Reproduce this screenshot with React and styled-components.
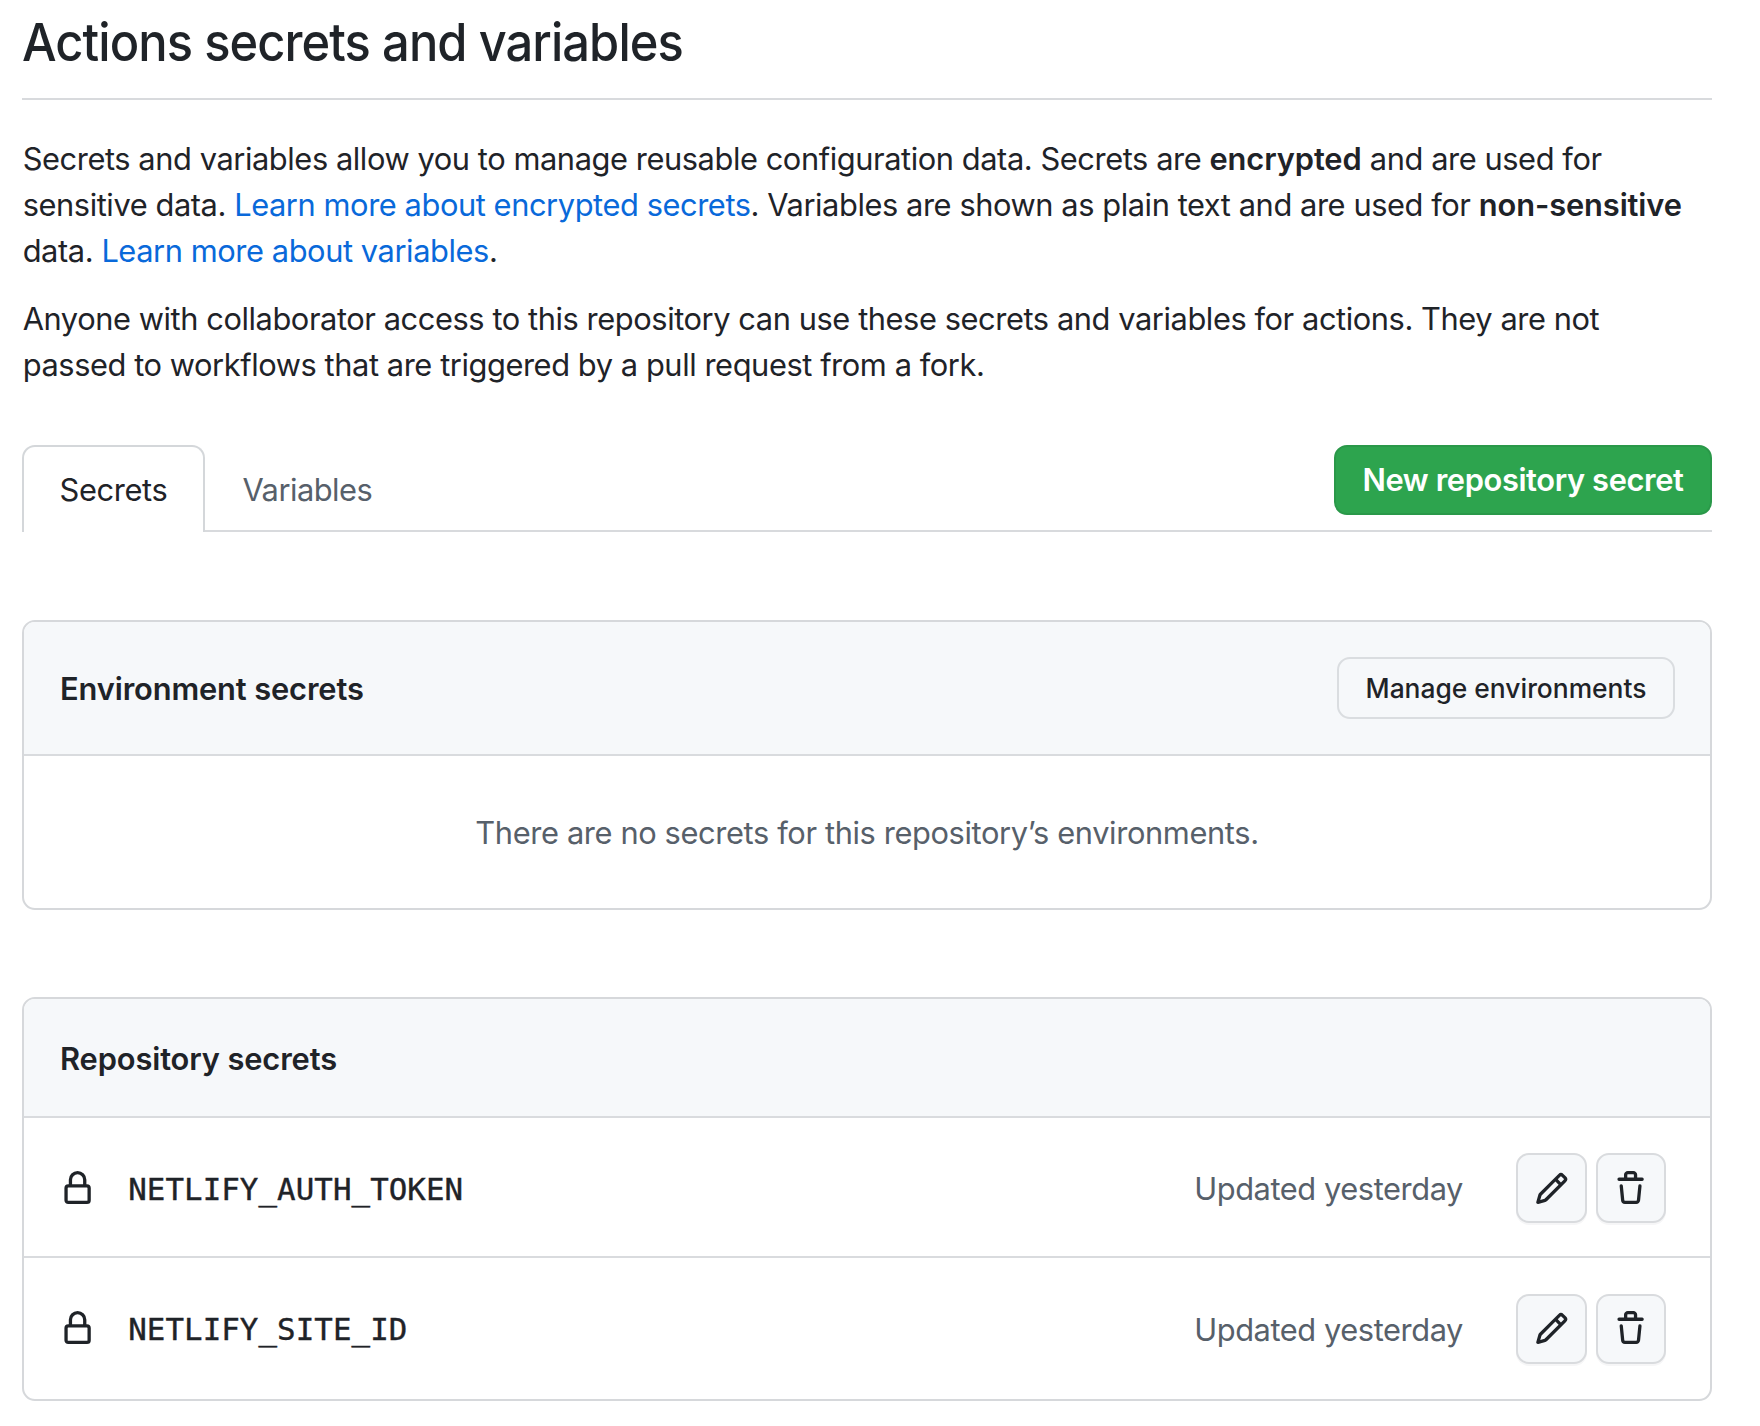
import React from "react";
import styled, { createGlobalStyle, css } from "styled-components";

const Global = createGlobalStyle`
  * { box-sizing: border-box; }
  body {
    margin: 0;
    background: #fff;
    color: #1f2328;
    font-family: Inter, "Liberation Sans", sans-serif;
    font-size: 30.8px;
    font-weight: 440;
    line-height: 46px;
  }
`;

const Page = styled.main`
  width: 1690px;
  margin-left: 22px;
  padding-top: 9px;
`;

const Title = styled.h1`
  margin: 0 0 36px;
  padding: 0 0 23px;
  border-bottom: 2px solid #d8dadd;
  font-size: 52.8px;
  line-height: 66px;
  font-weight: 460;
  letter-spacing: -1px;
`;

const Condensed = styled.span`
  display: block;
  width: max-content;
  transform: scaleX(0.925);
  transform-origin: left;
`;

const Paragraph = styled.p`
  margin: 0 0 22px;
  padding-left: 0.7px;
  white-space: nowrap;
  letter-spacing: -0.42px;
`;

const Line = styled.span`
  display: block;
  width: max-content;
`;

const Strong = styled.strong`
  font-weight: 600;
  letter-spacing: -0.1px;
`;

const Link = styled.a`
  color: #0969da;
  text-decoration: none;
`;

const TabBar = styled.div`
  display: flex;
  justify-content: space-between;
  align-items: flex-start;
  height: 87px;
  margin-top: 57px;
  box-shadow: inset 0 -2px 0 #d8dadd;
`;

const TabList = styled.nav`
  display: flex;
`;

const Tab = styled.a`
  height: 87px;
  padding: 20px 35.5px 0;
  border: 2px solid transparent;
  border-bottom: 0;
  border-radius: 13px 13px 0 0;
  color: #57606a;
  letter-spacing: -0.5px;
  ${(p) =>
    p.$active &&
    css`
      background: #fff;
      border-color: #d4d7da;
      color: #1f2328;
      letter-spacing: -0.35px;
    `}
`;

const PrimaryButton = styled.button`
  width: 378px;
  height: 70px;
  padding: 0;
  border: 2px solid #2a9849;
  border-radius: 13px;
  background: #2da44e;
  color: #fff;
  font: 560 30.8px/46px Inter, sans-serif;
  letter-spacing: -0.38px;
`;

const Box = styled.section`
  margin-top: ${(p) => p.$gap}px;
  border: 2px solid #d6d8db;
  border-radius: 13px;
  overflow: hidden;
`;

const BoxHeader = styled.header`
  display: flex;
  align-items: center;
  justify-content: space-between;
  height: ${(p) => p.$height}px;
  padding: 0 35px 0 36px;
  background: #f6f8fa;
  border-bottom: 2px solid #d9dbde;
`;

const Heading = styled.h2`
  margin: 0;
  padding-top: 2px;
  font-size: 30.8px;
  font-weight: 600;
  letter-spacing: -0.12px;
`;

const SmallButton = styled.button`
  width: 338px;
  height: 62px;
  padding: 0;
  border: 2px solid #dadde0;
  border-radius: 13px;
  background: #f6f8fa;
  color: #1f2328;
  font: 500 26.4px/40px Inter, sans-serif;
`;

const Empty = styled.div`
  display: flex;
  align-items: center;
  justify-content: center;
  height: 152px;
  padding-top: 1px;
  color: #57606a;
  letter-spacing: -0.37px;
`;

const Row = styled.div`
  display: flex;
  align-items: center;
  height: ${(p) => p.$height}px;
  padding: ${(p) => p.$shift}px 44px 0 36px;
  & + & {
    border-top: 2px solid #d9dbde;
  }
`;

const Icon = styled.svg`
  display: block;
  width: 35.2px;
  height: 35.2px;
  margin-top: 1px;
  fill: #1f2328;
`;

const Name = styled.code`
  margin-left: 33px;
  padding-top: 1px;
  font-family: "DejaVu Sans Mono", monospace;
  font-size: 30.8px;
  letter-spacing: 0.07px;
  -webkit-text-stroke: 0.4px currentColor;
`;

const Updated = styled.span`
  margin-left: auto;
  margin-right: 53px;
  padding-top: 2px;
  color: #57606a;
  letter-spacing: -0.42px;
`;

const Actions = styled.div`
  display: flex;
  gap: 9px;
`;

const IconButton = styled.button`
  display: grid;
  place-items: center;
  width: ${(p) => p.$width}px;
  height: 70px;
  padding: 0;
  border: 2px solid #d9dbde;
  border-radius: 13px;
  background: #f6f8fa;
  box-shadow: 0 2px 0 rgba(31, 35, 40, 0.04);
`;

const LockIcon = () => (
  <Icon viewBox="0 0 16 16">
    <path fillRule="evenodd" d="M4 4v2h-.25A1.75 1.75 0 002 7.75v5.5c0 .966.784 1.75 1.75 1.75h8.5A1.75 1.75 0 0014 13.25v-5.5A1.75 1.75 0 0012.25 6H12V4a4 4 0 10-8 0zm6.5 2V4a2.5 2.5 0 10-5 0v2h5zM12 7.5h.25a.25.25 0 01.25.25v5.5a.25.25 0 01-.25.25h-8.5a.25.25 0 01-.25-.25v-5.5a.25.25 0 01.25-.25H12z" />
  </Icon>
);

const PencilIcon = () => (
  <Icon viewBox="0 0 16 16">
    <path fillRule="evenodd" d="M11.013 1.427a1.75 1.75 0 012.474 0l1.086 1.086a1.75 1.75 0 010 2.474l-8.61 8.61c-.21.21-.47.364-.756.445l-3.251.93a.75.75 0 01-.927-.928l.929-3.25a1.75 1.75 0 01.445-.758l8.61-8.61zm1.414 1.06a.25.25 0 00-.354 0L10.811 3.75l1.439 1.44 1.263-1.263a.25.25 0 000-.354l-1.086-1.086zM11.189 6.25L9.75 4.81l-6.286 6.287a.25.25 0 00-.064.108l-.558 1.953 1.953-.558a.249.249 0 00.108-.064l6.286-6.286z" />
  </Icon>
);

const TrashIcon = () => (
  <Icon viewBox="0 0 16 16">
    <path fillRule="evenodd" d="M6.5 1.75a.25.25 0 01.25-.25h2.5a.25.25 0 01.25.25V3h-3V1.75zm4.5 0V3h2.25a.75.75 0 010 1.5H2.75a.75.75 0 010-1.5H5V1.75C5 .784 5.784 0 6.75 0h2.5C10.216 0 11 .784 11 1.75zM4.496 6.675a.75.75 0 10-1.492.15l.66 6.6A1.75 1.75 0 005.405 15h5.19c.9 0 1.652-.681 1.741-1.576l.66-6.6a.75.75 0 00-1.492-.149l-.66 6.6a.25.25 0 01-.249.225h-5.19a.25.25 0 01-.249-.225l-.66-6.6z" />
  </Icon>
);

const secrets = [
  { name: "NETLIFY_AUTH_TOKEN", height: 138, shift: 2 },
  { name: "NETLIFY_SITE_ID", height: 143, shift: 0 },
];

export default function App() {
  return (
    <>
      <Global />
      <Page>
        <Title>
          <Condensed>Actions secrets and variables</Condensed>
        </Title>
        <Paragraph>
          <Line>
            Secrets and variables allow you to manage reusable configuration data. Secrets are <Strong>encrypted</Strong> and are used for
          </Line>
          <Line>
            sensitive data. <Link>Learn more about encrypted secrets</Link>. Variables are shown as plain text and are used for <Strong>non-sensitive</Strong>
          </Line>
          <Line>
            data. <Link>Learn more about variables</Link>.
          </Line>
        </Paragraph>
        <Paragraph>
          <Line>Anyone with collaborator access to this repository can use these secrets and variables for actions. They are not</Line>
          <Line>passed to workflows that are triggered by a pull request from a fork.</Line>
        </Paragraph>
        <TabBar>
          <TabList>
            <Tab $active>Secrets</Tab>
            <Tab>Variables</Tab>
          </TabList>
          <PrimaryButton>New repository secret</PrimaryButton>
        </TabBar>
        <Box $gap={88}>
          <BoxHeader $height={134}>
            <Heading>Environment secrets</Heading>
            <SmallButton>Manage environments</SmallButton>
          </BoxHeader>
          <Empty>There are no secrets for this repository’s environments.</Empty>
        </Box>
        <Box $gap={87}>
          <BoxHeader $height={119}>
            <Heading>Repository secrets</Heading>
          </BoxHeader>
          {secrets.map((s) => (
            <Row key={s.name} $height={s.height} $shift={s.shift}>
              <LockIcon />
              <Name>{s.name}</Name>
              <Updated>Updated yesterday</Updated>
              <Actions>
                <IconButton $width={71}><PencilIcon /></IconButton>
                <IconButton $width={70}><TrashIcon /></IconButton>
              </Actions>
            </Row>
          ))}
        </Box>
      </Page>
    </>
  );
}
